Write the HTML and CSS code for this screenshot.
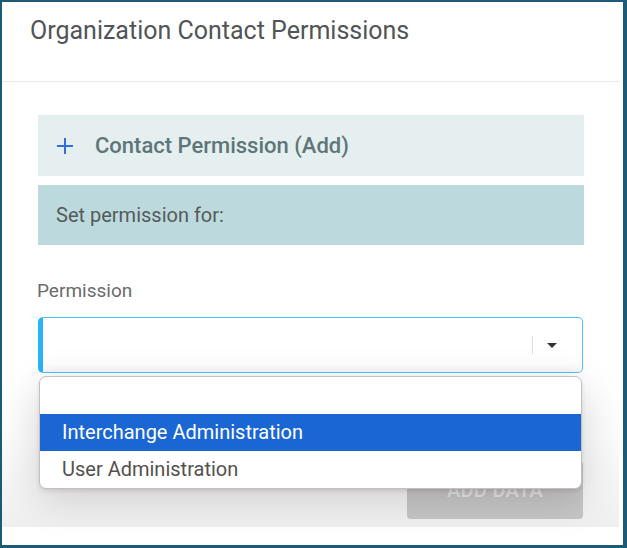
FILE: index.html
```html
<!DOCTYPE html>
<html>
<head>
<meta charset="utf-8">
<link rel="stylesheet" href="styles.css">
</head>
<body>
<div class="frame">
  <div class="header">
    <h1 class="title">Organization Contact Permissions</h1>
  </div>
  <div class="body">
    <div class="panel-add">
      <svg class="plus" width="16" height="16" viewBox="0 0 16 16"><path d="M8 0V16M0 8H16" stroke="#2f6fdc" stroke-width="2" fill="none"/></svg>
      <span class="panel-add-text">Contact Permission (Add)</span>
    </div>
    <div class="panel-set">Set permission for:</div>
    <div class="field">
      <div class="label">Permission</div>
      <div class="select-wrap">
        <div class="select">
          <span class="divider"></span>
          <span class="caret"></span>
        </div>
        <div class="dropdown">
          <div class="option empty"></div>
          <div class="option active">Interchange Administration</div>
          <div class="option">User Administration</div>
        </div>
      </div>
    </div>
    <div class="footer">
      <button class="btn">ADD DATA</button>
    </div>
  </div>
</div>
</body>
</html>
```
FILE: styles.css
```css
* { box-sizing: border-box; }
html, body { margin: 0; padding: 0; background: #fff; }
body { font-family: Roboto, "Liberation Sans", sans-serif; }

.frame {
  width: 627px;
  height: 548px;
  border: 2px solid #1d5a77;
  border-right-width: 4px;
  border-bottom-width: 3px;
  display: flex;
  flex-direction: column;
  background: #fff;
}

.header {
  height: 80px;
  border-bottom: 1px solid #e9e9e9;
  padding: 14px 0 0 28px;
  margin-right: 4px;
}
.title {
  margin: 0;
  font-size: 25px;
  line-height: 30px;
  font-weight: 400;
  color: #505457;
}

.body {
  display: flex;
  flex-direction: column;
  padding: 33px 0 0 0;
  margin-right: 4px;
}

.panel-add {
  margin: 0 35px 0 36px;
  height: 61px;
  background: #e5eff0;
  display: flex;
  align-items: center;
  padding-left: 19px;
  gap: 22px;
}
.plus { flex: none; }
.panel-add-text {
  font-size: 22px;
  font-weight: 500;
  color: #5e7678;
}

.panel-set {
  margin: 9px 35px 0 36px;
  height: 60px;
  background: #bcdadd;
  display: flex;
  align-items: center;
  padding-left: 18px;
  font-size: 20px;
  color: #555a5b;
}

.field {
  margin: 35px 36px 0 35px;
  position: relative;
  z-index: 2;
}
.label {
  font-size: 19px;
  line-height: 22px;
  color: #6b6b6b;
}
.select-wrap {
  position: relative;
  margin-top: 15px;
  margin-left: 1px;
}
.select {
  height: 56px;
  border: 1px solid #4fc3f7;
  border-left: 5px solid #29b3f6;
  border-radius: 5px;
  background: #fff;
  box-shadow: inset 0 -10px 10px -8px rgba(0,0,0,0.06);
  display: flex;
  align-items: center;
  justify-content: flex-end;
  padding-right: 25px;
}
.divider {
  width: 1px;
  height: 18px;
  background: #dedede;
  margin-right: 14px;
}
.caret {
  width: 0;
  height: 0;
  border-left: 5px solid transparent;
  border-right: 5px solid transparent;
  border-top: 5px solid #333;
}

.dropdown {
  position: absolute;
  left: 1px;
  right: 1px;
  top: 59px;
  background: #fff;
  border: 1px solid #cbbdbd;
  border-radius: 7px;
  overflow: hidden;
  box-shadow: 0 10px 40px rgba(0,0,0,0.16), 0 2px 4px rgba(0,0,0,0.1);
}
.option {
  height: 37px;
  line-height: 37px;
  padding-left: 22px;
  font-size: 20px;
  color: #55504d;
}
.option.active {
  background: #1a66d3;
  color: #fff;
}

.footer {
  margin-top: 10px;
  height: 144px;
  background: linear-gradient(to bottom, #fff 0%, #fbfbfb 40%, #efefef 100%);
  display: flex;
  justify-content: flex-end;
  align-items: flex-end;
  padding: 0 36px 8px 0;
}
.btn {
  width: 176px;
  height: 58px;
  border: none;
  border-radius: 4px;
  background: #c6c6c6;
  color: #e4e4e4;
  font-family: Roboto, "Liberation Sans", sans-serif;
  font-size: 20px;
  font-weight: 500;
  letter-spacing: 0.3px;
}
```
